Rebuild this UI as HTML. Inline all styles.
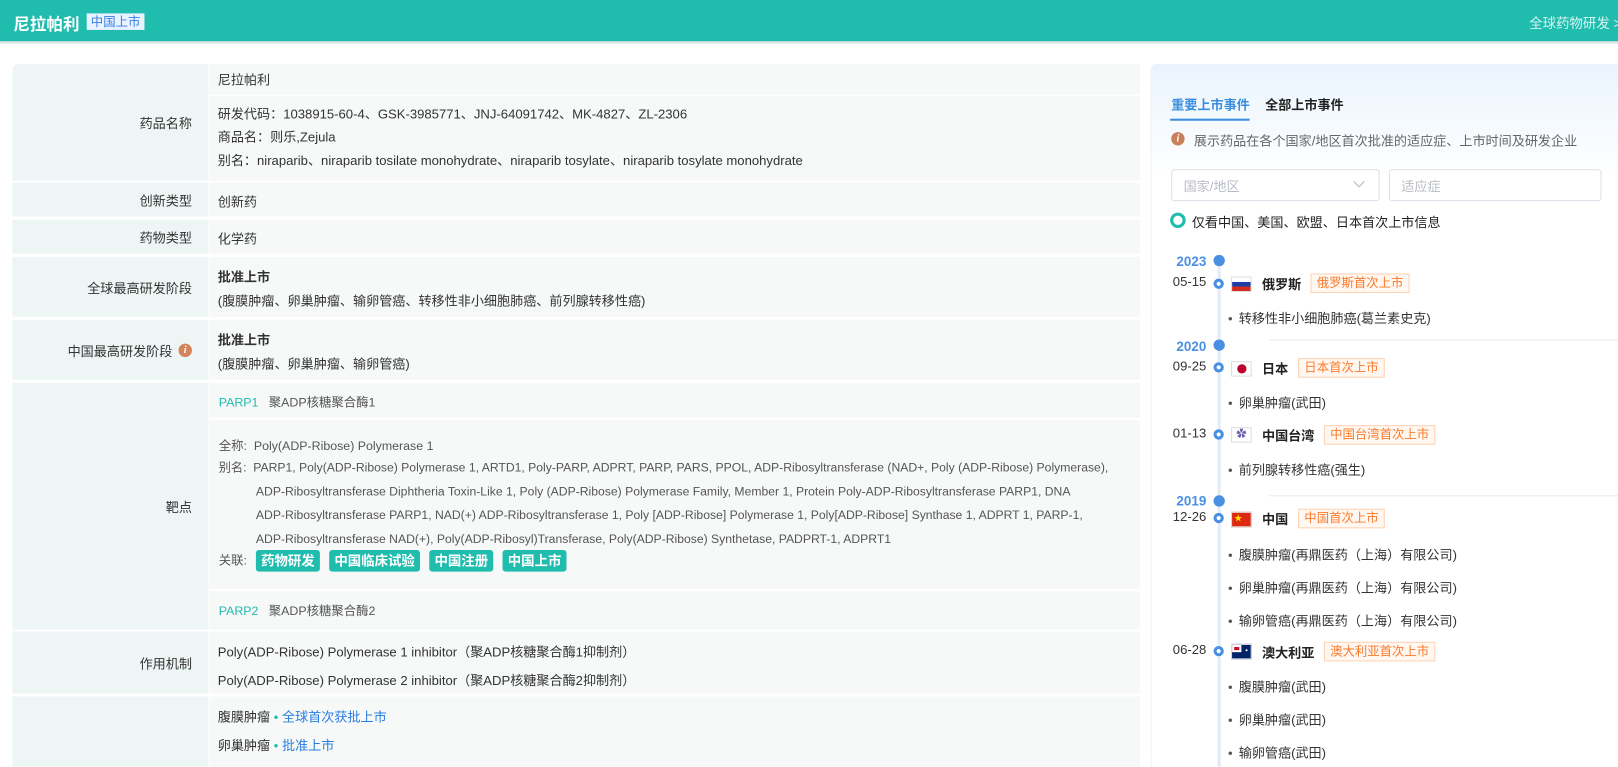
<!DOCTYPE html>
<html><head><meta charset="utf-8"><style>
*{margin:0;padding:0;box-sizing:border-box}
body{width:1618px;height:766px;overflow:hidden;background:#fff;font-family:"Liberation Sans","Noto Sans CJK SC",sans-serif;font-size:12.7px;color:#333;position:relative}
#w{position:absolute;left:0;top:0;width:1568px;height:743px;transform:scale(1.03189);transform-origin:0 0;overflow:hidden}
.a{position:absolute;white-space:nowrap}
.hdr{position:absolute;left:0;top:0;width:1568px;height:42px;background:#20bcae;border-bottom:2px solid #e6e6e6}
.lab{position:absolute;left:12px;width:190px;background:#eef5f5;text-align:right;padding-right:16px;color:#333;display:flex;align-items:center;justify-content:flex-end}
.val{position:absolute;left:203px;width:902px;background:#f7f9f9}
.tg{display:inline-block;background:#20bcae;color:#fff;font-weight:bold;border-radius:3px;padding:0 5px;height:21px;line-height:21px;margin-right:6px;font-size:13px}
.dot{position:absolute;left:1176px;width:11px;height:11px;border-radius:50%;background:#4a90e2}
.ring{position:absolute;left:1176px;width:10px;height:10px;border-radius:50%;border:3px solid #4a90e2;background:#fff}
.yr{position:absolute;left:1120px;width:49px;text-align:right;color:#4a90e2;font-weight:bold;font-size:13px}
.dt{position:absolute;left:1115px;width:54px;text-align:right;color:#333}
.fl{position:absolute;left:1193px;width:20px;height:15px;border:1px solid #ddd;overflow:hidden}
.nm{position:absolute;left:1223px;font-weight:bold;color:#222}
.ot{position:absolute;border:1px solid #fcd3b5;background:#fff7f0;color:#fa7a2a;height:19px;line-height:17px;padding:0 5px;font-size:12px}
.li{position:absolute;left:1190px;color:#333;white-space:nowrap}
.li:before{content:"•";margin-right:6px;color:#555}
.sep{position:absolute;left:1230px;width:388px;height:1px;background:#e8e8e8}
</style></head><body><div id="w">
<div class="hdr"></div>
<div class="a" style="left:13px;top:10px;color:#fff;font-size:16px;font-weight:bold">尼拉帕利</div>
<div class="a" style="left:84px;top:13px;height:16px;line-height:16px;background:#e8f3ff;color:#3a7de0;font-size:12px;padding:0 4px">中国上市</div>
<div class="a" style="left:1482px;top:12px;color:#d8f5f1;font-size:13px">全球药物研发 &gt;</div>

<div class="lab" style="top:62px;height:113px;border-radius:6px 0 0 0">药品名称</div>
<div class="val" style="top:62px;height:30px"></div>
<div class="val" style="top:93px;height:82px"></div>
<div class="a" style="left:211px;top:67px">尼拉帕利</div>
<div class="a" style="left:211px;top:100px">研发代码：1038915-60-4、GSK-3985771、JNJ-64091742、MK-4827、ZL-2306</div>
<div class="a" style="left:211px;top:122px">商品名：则乐,Zejula</div>
<div class="a" style="left:211px;top:145px">别名：niraparib、niraparib tosilate monohydrate、niraparib tosylate、niraparib tosylate monohydrate</div>

<div class="lab" style="top:177px;height:33px">创新类型</div><div class="val" style="top:177px;height:33px"></div>
<div class="a" style="left:211px;top:185px">创新药</div>
<div class="lab" style="top:213px;height:33px">药物类型</div><div class="val" style="top:213px;height:33px"></div>
<div class="a" style="left:211px;top:221px">化学药</div>

<div class="lab" style="top:249px;height:58px">全球最高研发阶段</div><div class="val" style="top:249px;height:58px"></div>
<div class="a" style="left:211px;top:258px;font-weight:bold">批准上市</div>
<div class="a" style="left:211px;top:281px">(腹膜肿瘤、卵巢肿瘤、输卵管癌、转移性非小细胞肺癌、前列腺转移性癌)</div>

<div class="lab" style="top:310px;height:58px">中国最高研发阶段<span style="display:inline-block;width:13px;height:13px;border-radius:50%;background:#d4845a;color:#fff;font-size:10px;line-height:13px;text-align:center;font-style:italic;font-weight:bold;margin-left:6px;font-family:'Liberation Serif',serif">i</span></div>
<div class="val" style="top:310px;height:58px"></div>
<div class="a" style="left:211px;top:319px;font-weight:bold">批准上市</div>
<div class="a" style="left:211px;top:342px">(腹膜肿瘤、卵巢肿瘤、输卵管癌)</div>

<div class="lab" style="top:371px;height:239px">靶点</div>
<div class="val" style="top:371px;height:34px"></div>
<div class="val" style="top:407px;height:164px"></div>
<div class="val" style="top:573px;height:37px"></div>
<div class="a" style="left:212px;top:381px;font-size:12px"><span style="color:#20bcae">PARP1</span>&nbsp;&nbsp;&nbsp;<span style="color:#555">聚ADP核糖聚合酶1</span></div>
<div class="a" style="left:212px;top:423px;font-size:12px;color:#555">全称:&nbsp;&nbsp;Poly(ADP-Ribose) Polymerase 1</div>
<div class="a" style="left:212px;top:442px;font-size:11.8px;color:#555;line-height:23px">别名:&nbsp;&nbsp;PARP1, Poly(ADP-Ribose) Polymerase 1, ARTD1, Poly-PARP, ADPRT, PARP, PARS, PPOL, ADP-Ribosyltransferase (NAD+, Poly (ADP-Ribose) Polymerase),</div>
<div class="a" style="left:248px;top:465px;font-size:11.8px;color:#555;line-height:23px">ADP-Ribosyltransferase Diphtheria Toxin-Like 1, Poly (ADP-Ribose) Polymerase Family, Member 1, Protein Poly-ADP-Ribosyltransferase PARP1, DNA<br>ADP-Ribosyltransferase PARP1, NAD(+) ADP-Ribosyltransferase 1, Poly [ADP-Ribose] Polymerase 1, Poly[ADP-Ribose] Synthase 1, ADPRT 1, PARP-1,<br>ADP-Ribosyltransferase NAD(+), Poly(ADP-Ribosyl)Transferase, Poly(ADP-Ribose) Synthetase, PADPRT-1, ADPRT1</div>
<div class="a" style="left:212px;top:533px;font-size:12px;color:#555;line-height:21px">关联:&nbsp;&nbsp;</div>
<div class="a" style="left:248px;top:533px;font-size:13px"><span class="tg">药物研发</span><span class="tg" style="margin-left:3px">中国临床试验</span><span class="tg" style="margin-left:3px">中国注册</span><span class="tg" style="margin-left:3px">中国上市</span></div>
<div class="a" style="left:212px;top:583px;font-size:12px"><span style="color:#20bcae">PARP2</span>&nbsp;&nbsp;&nbsp;<span style="color:#555">聚ADP核糖聚合酶2</span></div>

<div class="lab" style="top:612px;height:60px">作用机制</div><div class="val" style="top:612px;height:60px"></div>
<div class="a" style="left:211px;top:621px">Poly(ADP-Ribose) Polymerase 1 inhibitor（聚ADP核糖聚合酶1抑制剂）</div>
<div class="a" style="left:211px;top:649px">Poly(ADP-Ribose) Polymerase 2 inhibitor（聚ADP核糖聚合酶2抑制剂）</div>

<div class="lab" style="top:675px;height:80px"></div><div class="val" style="top:675px;height:80px"></div>
<div class="a" style="left:211px;top:684px">腹膜肿瘤 <span style="color:#20bcae">•</span> <span style="color:#2a7de1">全球首次获批上市</span></div>
<div class="a" style="left:211px;top:712px">卵巢肿瘤 <span style="color:#20bcae">•</span> <span style="color:#2a7de1">批准上市</span></div>

<div class="a" style="left:1115px;top:62px;width:460px;height:700px;background:linear-gradient(180deg,#eaf4fd 0,#fff 110px);border-left:1px solid #eef0f3;border-radius:6px 0 0 0"></div>
<div class="a" style="left:1135px;top:91px;color:#3a8ee0;font-weight:bold">重要上市事件</div>
<div class="a" style="left:1134px;top:115px;width:77px;height:2px;background:#3a8ee0"></div>
<div class="a" style="left:1226px;top:91px;color:#222;font-weight:bold">全部上市事件</div>
<div class="a" style="left:1135px;top:128px;width:13px;height:13px;border-radius:50%;background:#c97f5a;color:#fff;font-size:10px;line-height:13px;text-align:center;font-style:italic;font-weight:bold;font-family:'Liberation Serif',serif">i</div>
<div class="a" style="left:1157px;top:126px;color:#666">展示药品在各个国家/地区首次批准的适应症、上市时间及研发企业</div>
<div class="a" style="left:1135px;top:164px;width:202px;height:31px;border:1px solid #dcdfe6;border-radius:3px;background:#fff"></div>
<div class="a" style="left:1147px;top:170px;color:#b8bcc4">国家/地区</div>
<svg class="a" style="left:1311px;top:175px" width="12" height="8"><path d="M1 1l5 5 5-5" fill="none" stroke="#b8bcc4" stroke-width="1.2"/></svg>
<div class="a" style="left:1346px;top:164px;width:206px;height:31px;border:1px solid #dcdfe6;border-radius:3px;background:#fff"></div>
<div class="a" style="left:1358px;top:170px;color:#b8bcc4">适应症</div>
<div class="a" style="left:1134px;top:206px;width:15px;height:15px;border-radius:50%;border:3px solid #20bcae"></div>
<div class="a" style="left:1155px;top:205px;color:#222">仅看中国、美国、欧盟、日本首次上市信息</div>

<div class="a" style="left:1180px;top:252px;width:3px;height:500px;background:#e4ebf5"></div>
<div class="dot" style="top:247px"></div>
<div class="yr" style="top:246px">2023</div>
<div class="ring" style="top:270px"></div>
<div class="dt" style="top:266px">05-15</div>
<div class="fl" style="top:268px;background:linear-gradient(#fff 0 33%,#1c3ea8 33% 66%,#d52b1e 66%)"></div>
<div class="nm" style="top:265px">俄罗斯</div>
<div class="ot" style="left:1270px;top:265px">俄罗斯首次上市</div>
<div class="li" style="top:298px">转移性非小细胞肺癌(葛兰素史克)</div>

<div class="sep" style="top:329px"></div>
<div class="dot" style="top:329px"></div>
<div class="yr" style="top:328px">2020</div>
<div class="ring" style="top:351px"></div>
<div class="dt" style="top:348px">09-25</div>
<div class="fl" style="top:350px;background:#fff"><div style="width:9px;height:9px;border-radius:50%;background:#bc002d;margin:2px auto"></div></div>
<div class="nm" style="top:347px">日本</div>
<div class="ot" style="left:1258px;top:347px">日本首次上市</div>
<div class="li" style="top:380px">卵巢肿瘤(武田)</div>
<div class="ring" style="top:416px"></div>
<div class="dt" style="top:413px">01-13</div>
<div class="fl" style="top:414px;background:#fff;text-align:center;font-size:10px;line-height:13px;color:#6a5aa8">✿</div>
<div class="nm" style="top:412px">中国台湾</div>
<div class="ot" style="left:1283px;top:412px">中国台湾首次上市</div>
<div class="li" style="top:445px">前列腺转移性癌(强生)</div>

<div class="sep" style="top:480px"></div>
<div class="dot" style="top:480px"></div>
<div class="yr" style="top:478px">2019</div>
<div class="ring" style="top:497px"></div>
<div class="dt" style="top:494px">12-26</div>
<div class="fl" style="top:496px;background:#de2910;color:#ffde00;font-size:8px;line-height:12px;padding-left:2px">★</div>
<div class="nm" style="top:493px">中国</div>
<div class="ot" style="left:1258px;top:493px">中国首次上市</div>
<div class="li" style="top:527px">腹膜肿瘤(再鼎医药（上海）有限公司)</div>
<div class="li" style="top:559px">卵巢肿瘤(再鼎医药（上海）有限公司)</div>
<div class="li" style="top:591px">输卵管癌(再鼎医药（上海）有限公司)</div>
<div class="ring" style="top:626px"></div>
<div class="dt" style="top:623px">06-28</div>
<div class="fl" style="top:624px;background:#012169"><div style="width:9px;height:7px;background:#c8102e;border:2px solid #fff"></div><div style="position:absolute;left:12px;top:3px;color:#fff;font-size:5px">✦</div></div>
<div class="nm" style="top:622px">澳大利亚</div>
<div class="ot" style="left:1283px;top:622px">澳大利亚首次上市</div>
<div class="li" style="top:655px">腹膜肿瘤(武田)</div>
<div class="li" style="top:687px">卵巢肿瘤(武田)</div>
<div class="li" style="top:719px">输卵管癌(武田)</div>
</div></body></html>
